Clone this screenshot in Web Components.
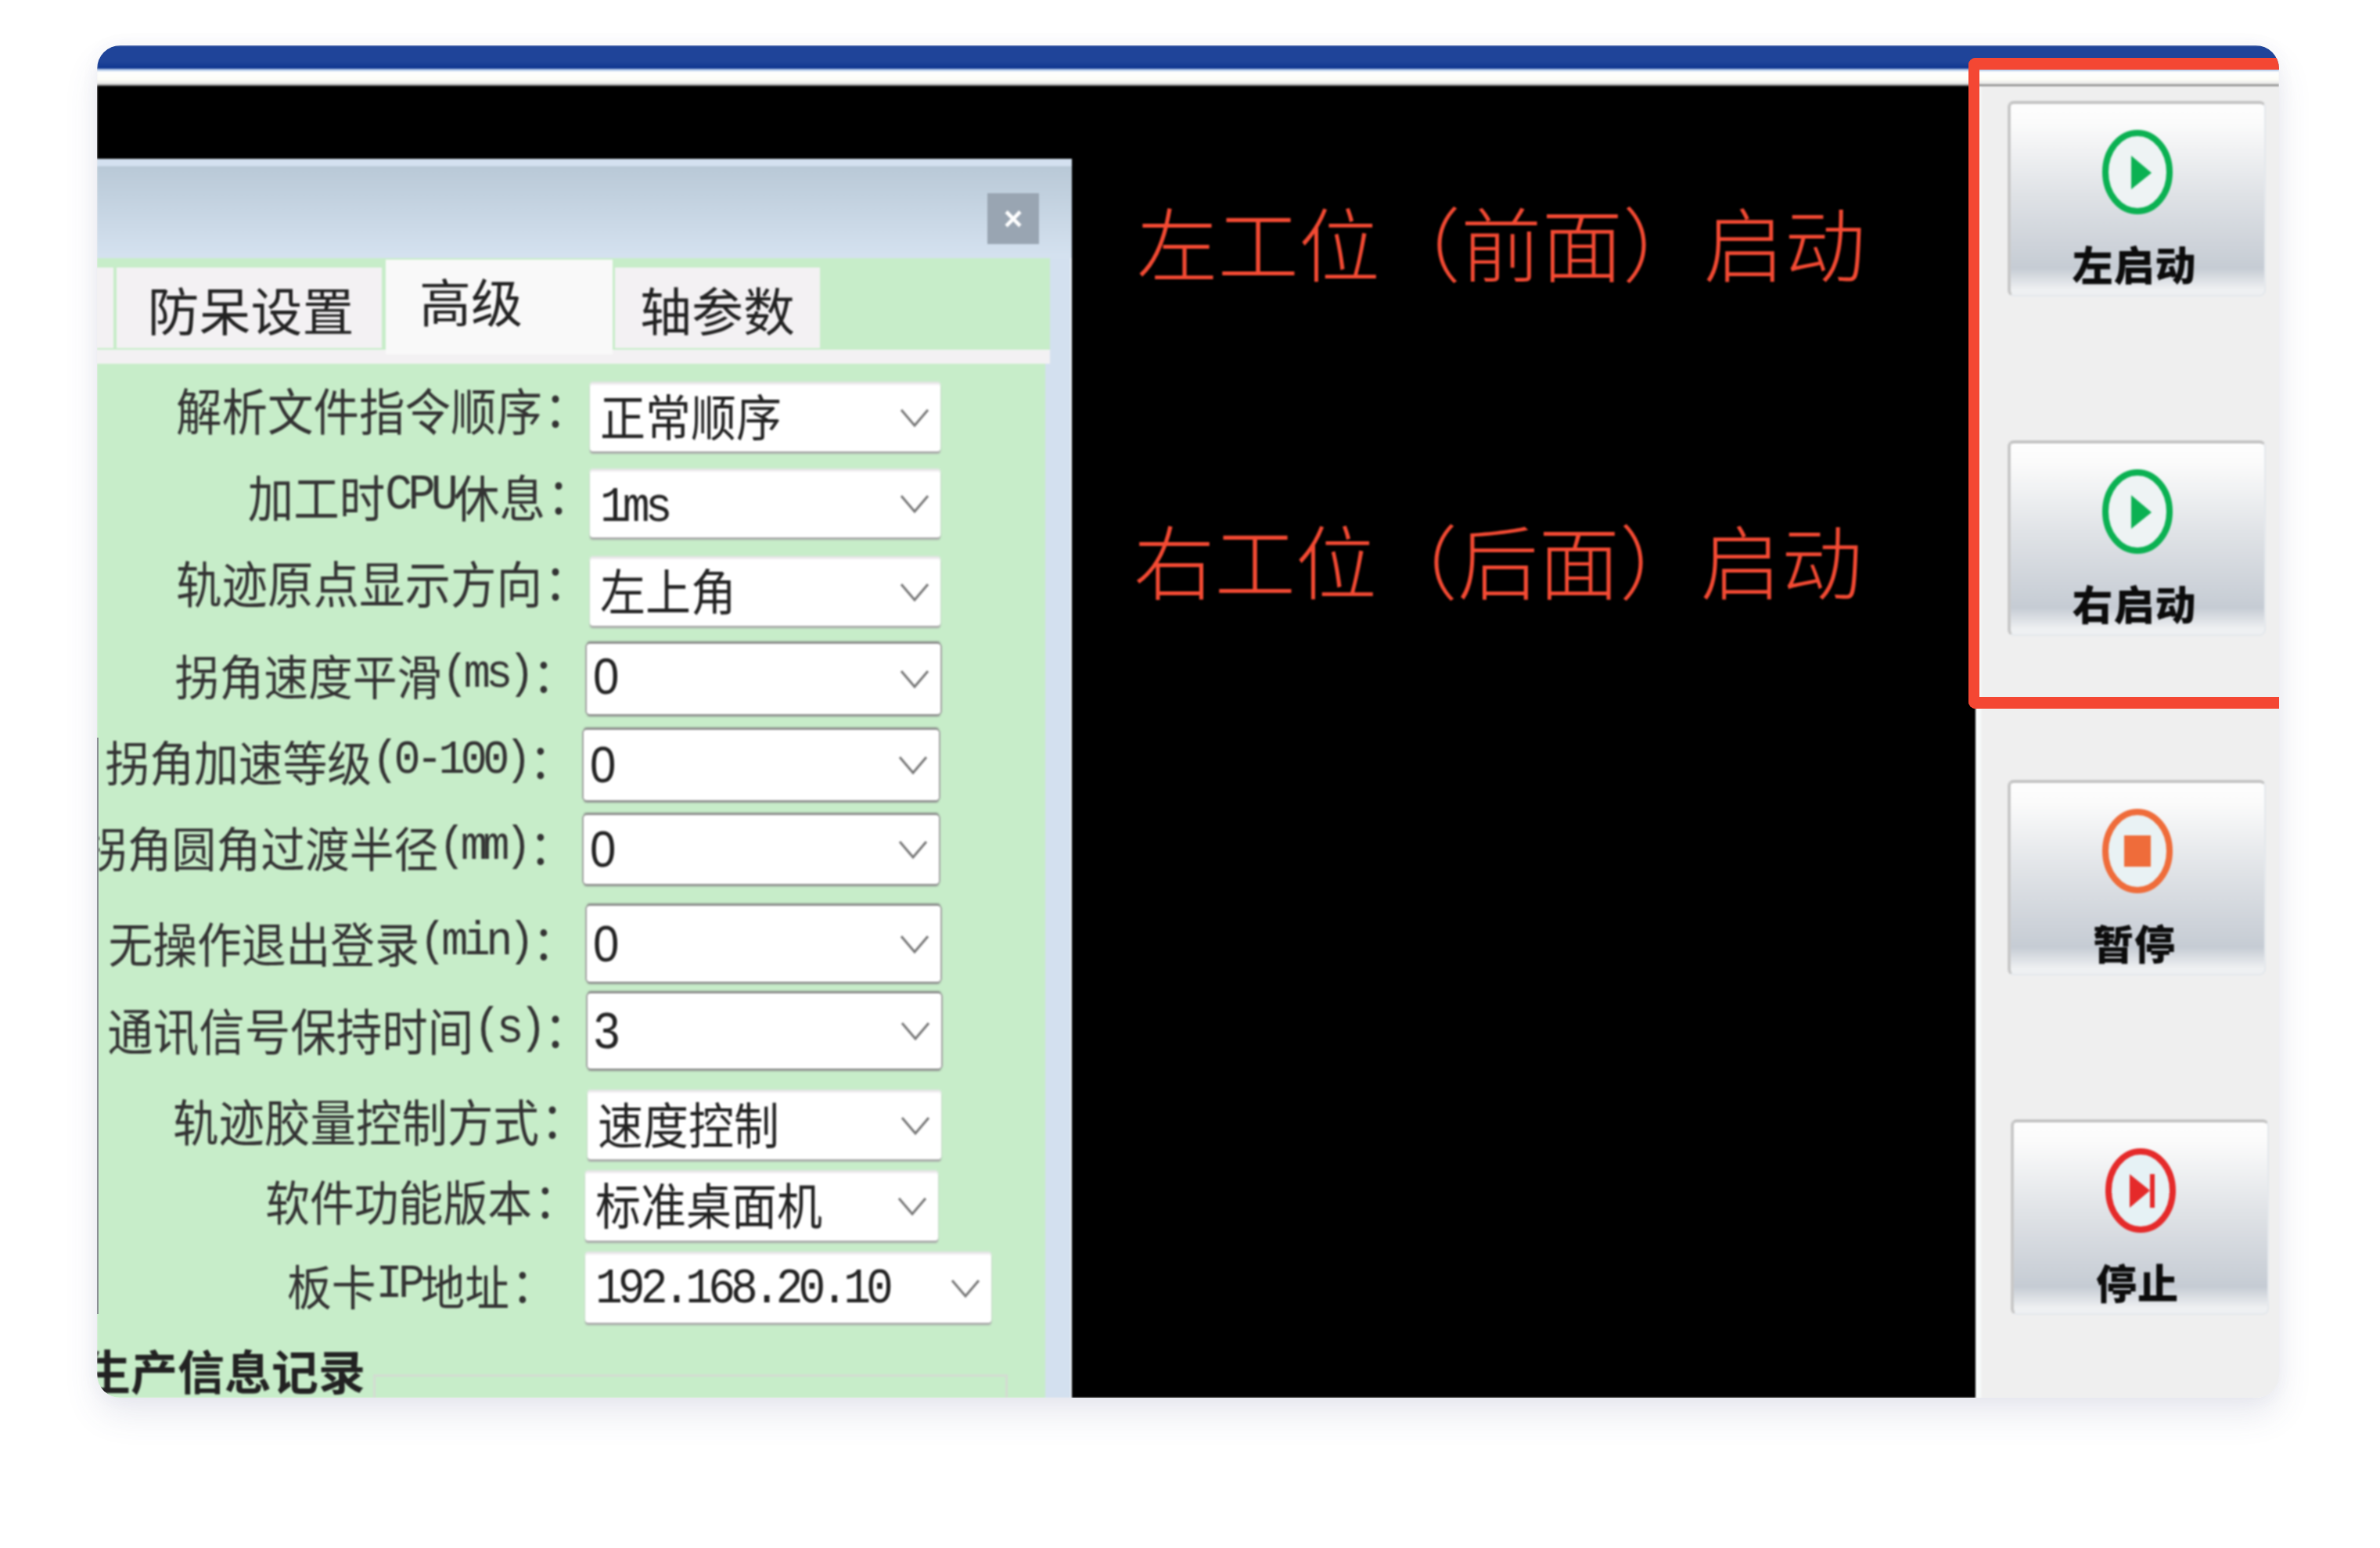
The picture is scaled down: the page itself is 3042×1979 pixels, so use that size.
<!DOCTYPE html>
<html lang="zh-CN">
<head>
<meta charset="utf-8">
<title>左工位启动</title>
<style>
  body { margin: 0; background: #fff; width: 3042px; height: 1979px; overflow: hidden; }
</style>
</head>
<body>
<hmi-window>
  <hmi-dialog slot="dialog">
    <hmi-tab slot="tabs" kind="stub"></hmi-tab>
    <hmi-tab slot="tabs" kind="idle" style="--w:339px;--ml:4px;--tx:4px">防呆设置</hmi-tab>
    <hmi-tab slot="tabs" kind="active" style="--w:290px;--ml:5px">高级</hmi-tab>
    <hmi-tab slot="tabs" kind="idle" style="--w:262px;--ml:3px">轴参数</hmi-tab>

    <hmi-row style="--mt:25px;--x:630px;--w:448px;--h:87px;--gap:27px;--fs:58.5px;--ty:-10px">
      解析文件指令顺序<span slot="value">正常顺序</span>
    </hmi-row>
    <hmi-row style="--mt:24px;--x:630px;--w:448px;--h:86px;--gap:23px;--fs:58.5px;--ty:-10px;--vy:6px">
      加工时<i>CPU</i>休息<span slot="value" class="mono">1ms</span>
    </hmi-row>
    <hmi-row style="--mt:26px;--x:630px;--w:448px;--h:87px;--gap:27px;--fs:58.5px;--ty:-12px">
      轨迹原点显示方向<span slot="value">左上角</span>
    </hmi-row>
    <hmi-row edge style="--mt:23px;--x:626px;--w:452px;--h:90px;--gap:38px;--ty:-6px;--ny:-3px">
      拐角速度平滑<i>(ms)</i><span slot="value" class="num">0</span>
    </hmi-row>
    <hmi-row edge style="--mt:20px;--x:622px;--w:454px;--h:90px;--gap:38px;--ty:-6px">
      拐角加速等级<i>(0-100)</i><span slot="value" class="num">0</span>
    </hmi-row>
    <hmi-row edge style="--mt:19px;--x:622px;--w:454px;--h:88px;--gap:38px;--ty:-4px">
      拐角圆角过渡半径<i>(mm)</i><span slot="value" class="num">0</span>
    </hmi-row>
    <hmi-row edge style="--mt:28px;--x:626px;--w:452px;--h:97px;--gap:38px;--ty:-2px">
      无操作退出登录<i>(min)</i><span slot="value" class="num">0</span>
    </hmi-row>
    <hmi-row edge style="--mt:15px;--x:627px;--w:452px;--h:96px;--gap:24px;--fs:58.5px;--ty:-2px">
      通讯信号保持时间<i>(s)</i><span slot="value" class="num">3</span>
    </hmi-row>
    <hmi-row style="--mt:29px;--x:627px;--w:452px;--h:87px;--gap:28px;--fs:58.5px;--ty:-6px">
      轨迹胶量控制方式<span slot="value">速度控制</span>
    </hmi-row>
    <hmi-row style="--mt:16px;--x:624px;--w:451px;--h:88px;--gap:34px;--ty:-8px">
      软件功能版本<span slot="value">标准桌面机</span>
    </hmi-row>
    <hmi-row style="--mt:16px;--x:624px;--w:519px;--h:89px;--gap:63px;--ty:-4px;--vy:2px">
      板卡<i>IP</i>地址<span slot="value" class="mono">192.168.20.10</span>
    </hmi-row>
    <hmi-group>生产信息记录</hmi-group>
  </hmi-dialog>

  <hmi-heading slot="notes" style="--top:146px;--left:83px">左工位（前面）启动</hmi-heading>
  <hmi-heading slot="notes" style="--top:302px;--left:79px">右工位（后面）启动</hmi-heading>

  <hmi-button slot="side" icon="play">左启动</hmi-button>
  <hmi-button slot="side" icon="play">右启动</hmi-button>
  <hmi-button slot="side" icon="pause">暂停</hmi-button>
  <hmi-button slot="side" icon="stop" style="--shift:4px">停止</hmi-button>
</hmi-window>

<script>
const CJK = '"Noto Sans CJK SC", "Liberation Sans", sans-serif'

class HmiWindow extends HTMLElement {
  constructor() {
    super()
    const shadow = this.attachShadow({ mode: "open" })
    shadow.innerHTML = `
      <style>
        :host {
          display: block;
          position: relative;
          width: 2789px;
          height: 1729px;
          margin: 58px 0 0 124px;
          border-radius: 30px;
          box-shadow: 0 22px 44px rgba(70, 80, 130, .12), 0 0 22px rgba(70, 80, 130, .05);
        }
        #clip {
          height: 100%;
          overflow: hidden;
          border-radius: 30px;
          background: #efefef;
          display: flex;
          flex-direction: column;
        }
        #screen { flex: 1; display: flex; flex-direction: column; min-height: 0; filter: blur(.8px); }
        #title { height: 30px; flex: none; background: linear-gradient(#1f4499 0 70%, #0e3490); }
        #strip { height: 22px; flex: none; background: linear-gradient(#bcd0ec 0 3px, #fff 3px, #fdfdf7 14px, #e8e8e8 19px, #555); }
        #main { flex: 1; display: flex; min-height: 0; }
        #work {
          width: 2401px;
          flex: none;
          background: #000;
          padding-top: 93px;
          display: flex;
          min-height: 0;
        }
        #notes { flex: 1; margin-top: -93px; padding-left: 0; }
        #side {
          flex: 1;
          display: flex;
          flex-direction: column;
          gap: 184px;
          padding: 19px 17px 0 34px;
          background: #efefef;
          border-left: 7px solid #f7fbfb;
          box-sizing: border-box;
        }
        #frame {
          position: absolute;
          left: 2392px;
          top: 16px;
          width: 420px;
          height: 832px;
          box-sizing: border-box;
          border: 15px solid #f44733;
          border-right: 0;
          border-left-width: 14px;
          border-radius: 9px 0 0 9px;
        }
        #edge { position: absolute; left: 0; top: 885px; width: 2px; height: 737px; background: #8b9094; }
        #topmask { position: absolute; inset: 0; border-radius: 30px; overflow: hidden; pointer-events: none; }
      </style>
      <div id="clip">
        <div id="screen">
          <div id="title"></div>
          <div id="strip"></div>
          <div id="main">
            <div id="work">
              <slot name="dialog"></slot>
              <div id="notes"><slot name="notes"></slot></div>
            </div>
            <div id="side"><slot name="side"></slot></div>
          </div>
        </div>
      </div>
      <div id="topmask"><div id="frame"></div><div id="edge"></div></div>
    `
  }
}
customElements.define("hmi-window", HmiWindow)

class HmiDialog extends HTMLElement {
  constructor() {
    super()
    const shadow = this.attachShadow({ mode: "open" })
    shadow.innerHTML = `
      <style>
        :host {
          display: flex;
          flex-direction: column;
          flex: none;
          width: 1246px;
          background: #d3e0ef;
          overflow: hidden;
          box-shadow: inset -2px 0 0 #eef3f8;
        }
        #head {
          height: 127px;
          flex: none;
          box-sizing: border-box;
          padding: 44px 42px 0 0;
          display: flex;
          justify-content: flex-end;
          background: linear-gradient(#d4e1f0 0 9px, #b9c9d7 10px, #d5e2f0);
        }
        #close {
          width: 66px;
          height: 65px;
          background: #99a5b2;
          color: #fff;
          font: bold 42px "Liberation Sans", sans-serif;
          display: flex;
          align-items: center;
          justify-content: center;
        }
        #tabs {
          height: 135px;
          flex: none;
          margin-right: 28px;
          display: flex;
          align-items: flex-start;
          background: linear-gradient(#c7edc9 0 117px, #f3f1f3 117px);
        }
        #body {
          flex: 1;
          min-height: 0;
          margin-right: 34px;
          background: #c7edc9;
          display: flex;
          flex-direction: column;
        }
      </style>
      <div id="head"><div id="close">×</div></div>
      <div id="tabs"><slot name="tabs"></slot></div>
      <div id="body"><slot></slot></div>
    `
  }
}
customElements.define("hmi-dialog", HmiDialog)

class HmiTab extends HTMLElement {
  constructor() {
    super()
    const shadow = this.attachShadow({ mode: "open" })
    shadow.innerHTML = `
      <style>
        :host {
          display: flex;
          flex: none;
          box-sizing: border-box;
          width: var(--w, 21px);
          margin-left: var(--ml, 0);
          margin-top: 12px;
          height: 103px;
          padding-left: var(--tx, 0);
          align-items: center;
          justify-content: center;
          background: #f3f1f3;
          color: #222;
          font: 66px/1 ${CJK};
        }
        :host([kind="active"]) {
          margin-top: 2px;
          height: 121px;
          background: #f9f9f9;
          align-items: flex-start;
          justify-content: flex-start;
          padding: 18px 0 0 43px;
          font-size: 66px;
        }
      </style>
      <slot></slot>
    `
  }
}
customElements.define("hmi-tab", HmiTab)

class HmiRow extends HTMLElement {
  constructor() {
    super()
    const shadow = this.attachShadow({ mode: "open" })
    shadow.innerHTML = `
      <style>
        :host {
          display: grid;
          flex: none;
          grid-template-columns: var(--x) var(--w);
          height: var(--h);
          margin-top: var(--mt);
          color: #333;
          font: 57px/1 ${CJK};
        }
        #label {
          display: flex;
          justify-content: flex-end;
          align-items: center;
          white-space: nowrap;
          padding-right: var(--gap);
          min-width: 0;
          font-size: var(--fs, 56.8px);
        }
        #label span { display: flex; transform: translateY(var(--ty, -4px)) scaleY(1.08); white-space: nowrap; }
        #colon { font-family: "Noto Sans CJK TC", sans-serif; width: 34px; justify-content: center; }
        ::slotted(i) {
          font-style: normal;
          font-family: "Liberation Mono", monospace;
          letter-spacing: -.1em;
        }
        #box {
          box-sizing: border-box;
          display: flex;
          align-items: center;
          justify-content: space-between;
          padding: 0 14px 0 13px;
          background: #fff;
          border-radius: 4px;
          color: #222;
          font-size: 58px;
          box-shadow: 0 -2px 2px #e8e4e8, 0 3px 2px #a8a8a8, inset 0 2px 1px #f1eef1;
        }
        :host([edge]) #box {
          box-shadow: 0 -3px 2px #888, 0 3px 2px #8e8e8e, -2px 0 1px #aaa, 2px 0 1px #aaa;
        }
        ::slotted(span) { transform: translateY(var(--vy, -4px)) scaleY(1.08); }
        ::slotted(.mono) {
          font-family: "Liberation Mono", monospace;
          letter-spacing: -.103em;
        }
        ::slotted(.num) {
          font-family: "Liberation Sans", sans-serif;
          font-size: 60px;
          margin-left: -5px;
          transform: translateY(var(--ny, 0)) scaleY(1.08);
        }
        svg { flex: none; }
      </style>
      <div id="label"><span><slot></slot></span><span id="colon">：</span></div>
      <div id="box">
        <slot name="value"></slot>
        <svg width="38" height="24" viewBox="0 0 38 24"><path d="M2 2 L19 22 L36 2" fill="none" stroke="#777" stroke-width="3"/></svg>
      </div>
    `
  }
}
customElements.define("hmi-row", HmiRow)

class HmiGroup extends HTMLElement {
  constructor() {
    super()
    const shadow = this.attachShadow({ mode: "open" })
    shadow.innerHTML = `
      <style>
        :host {
          display: flex;
          flex: none;
          height: 96px;
          color: #222;
          font: 600 60px/1 ${CJK};
        }
        #title {
          width: 343px;
          flex: none;
          margin-top: 30px;
          white-space: nowrap;
          display: flex;
          justify-content: flex-end;
        }
        #line {
          width: 805px;
          margin-left: 10px;
          margin-top: 66px;
          border: 3px solid #d3dcd2;
          border-bottom: 0;
        }
      </style>
      <div id="title"><slot></slot></div>
      <div id="line"></div>
    `
  }
}
customElements.define("hmi-group", HmiGroup)

class HmiHeading extends HTMLElement {
  constructor() {
    super()
    const shadow = this.attachShadow({ mode: "open" })
    shadow.innerHTML = `
      <style>
        :host {
          display: block;
          height: 104px;
          margin-top: var(--top);
          margin-left: var(--left);
          color: #f44a33;
          font: 300 103.5px/104px ${CJK};
          white-space: nowrap;
        }
      </style>
      <slot></slot>
    `
  }
}
customElements.define("hmi-heading", HmiHeading)

const ICONS = {
  play: { color: "#0bb152", fill: "#eef3f4", mark: '<path d="M-8 -21 L18 1 L-8 22 Z"/>' },
  pause: { color: "#ef6c3a", fill: "#e9f2f4", mark: '<rect x="-17" y="-20" width="34" height="40"/>' },
  stop: { color: "#e52a2a", fill: "#e6f2f5", mark: '<path d="M-14 -21 L12 0 L-14 22 Z"/><rect x="12" y="-21" width="6" height="43"/>' },
}

class HmiButton extends HTMLElement {
  constructor() {
    super()
    const shadow = this.attachShadow({ mode: "open" })
    const icon = ICONS[this.getAttribute("icon")]
    shadow.innerHTML = `
      <style>
        :host {
          display: flex;
          flex-direction: column;
          align-items: center;
          box-sizing: border-box;
          width: 330px;
          height: 250px;
          margin-left: var(--shift, 0);
          padding-top: 33px;
          border-radius: 8px;
          border-top: 4px solid #c4c4c4;
          border-left: 4px solid #c8c8c8;
          border-right: 2px solid #e4e8ec;
          border-bottom: 2px solid #e4e8ec;
          background: linear-gradient(#fefefe, #fbfbfb 10%, #dfe2e6 48%, #c6ccd4 86%, #eef0f2 97%);
          color: #0c0c0c;
          font: 900 52px/1 ${CJK};
        }
        svg { display: block; flex: none; }
        span { margin-top: 37px; margin-left: -8px; letter-spacing: 1px; white-space: nowrap; }
      </style>
      <svg width="90" height="108" viewBox="-45 -54 90 108">
        <ellipse rx="41" ry="50" fill="${icon.fill}" stroke="${icon.color}" stroke-width="8"/>
        <g fill="${icon.color}">${icon.mark}</g>
      </svg>
      <span><slot></slot></span>
    `
  }
}
customElements.define("hmi-button", HmiButton)
</script>
</body>
</html>
